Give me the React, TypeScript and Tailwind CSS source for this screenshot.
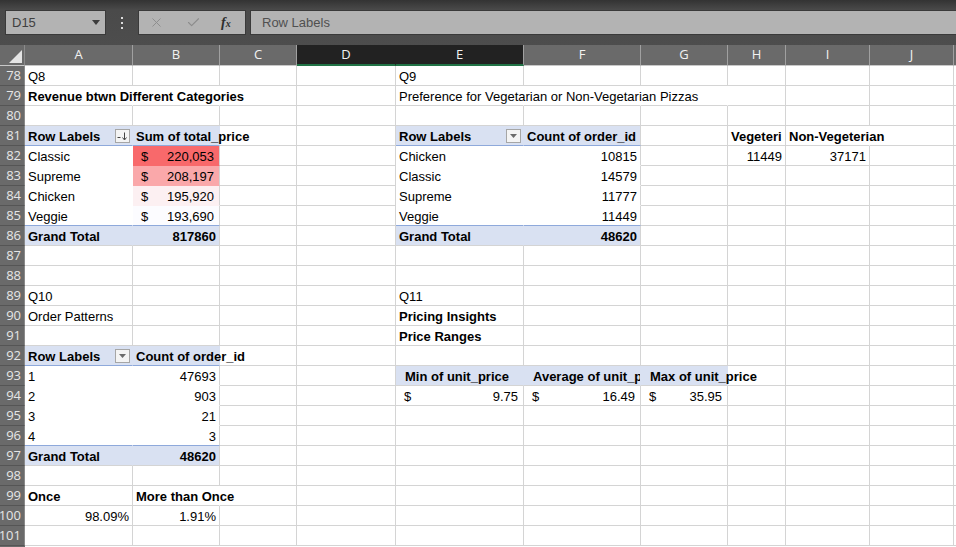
import { X, Check } from "lucide-react";

type Cell = {
    t?: string;
    b?: boolean;
    r?: boolean;
    ov?: boolean;
    cls?: string;
    cur?: string;
    f?: "sort" | "drop";
    pl?: string;
};
type Row = Partial<Record<number, Cell>>;

const W = ["w-[108px]", "w-[87px]", "w-[77px]", "w-[99px]", "w-[128px]", "w-[117px]", "w-[87px]", "w-[58px]", "w-[84px]", "w-[84px]"];
const LETTERS = ["A", "B", "C", "D", "E", "F", "G", "H", "I", "J"];

// cell looks
const G = "bg-white border-r-[#d4d4d4] border-b-[#d4d4d4]";
const NR = "bg-white border-r-white border-b-[#d4d4d4]";
const PH_L = "bg-[#d9e1f2] border-r-[#d9e1f2] border-b-[#8ea9db]";
const PH_R = "bg-[#d9e1f2] border-r-[#d4d4d4] border-b-[#8ea9db]";
const PD_L = "bg-white border-r-white border-b-white";
const PD_R = "bg-white border-r-[#d4d4d4] border-b-white";
const PDX_L = "bg-white border-r-white border-b-[#8ea9db]";
const PDX_R = "bg-white border-r-[#d4d4d4] border-b-[#8ea9db]";
const PG_L = "bg-[#d9e1f2] border-r-[#d9e1f2] border-b-[#d4d4d4]";
const PG_R = "bg-[#d9e1f2] border-r-[#d4d4d4] border-b-[#d4d4d4]";
const BL = "bg-[#d9e1f2] border-r-[#d9e1f2] border-b-[#d4d4d4]";

const ROWS: Record<number, Row> = {
    78: { 0: { t: "Q8" }, 4: { t: "Q9" } },
    79: {
        0: { t: "Revenue btwn Different Categories", b: true, ov: true, cls: NR },
        1: { cls: NR },
        4: { t: "Preference for Vegetarian or Non-Vegetarian Pizzas", ov: true, cls: NR },
        5: { cls: NR },
        6: { cls: NR },
    },
    81: {
        0: { t: "Row Labels", b: true, cls: PH_L, f: "sort" },
        1: { t: "Sum of total_price", b: true, ov: true, cls: PH_L },
        4: { t: "Row Labels", b: true, cls: PH_L, f: "drop" },
        5: { t: "Count of order_id", b: true, cls: PH_R },
        7: { t: "Vegeteri", b: true },
        8: { t: "Non-Vegeterian", b: true, ov: true, cls: NR },
    },
    82: {
        0: { t: "Classic", cls: PD_L },
        1: { cur: "220,053", cls: "bg-[#f8696b] border-r-[#d4d4d4] border-b-[#f8696b]" },
        4: { t: "Chicken", cls: PD_L },
        5: { t: "10815", r: true, cls: PD_R },
        7: { t: "11449", r: true },
        8: { t: "37171", r: true },
    },
    83: {
        0: { t: "Supreme", cls: PD_L },
        1: { cur: "208,197", cls: "bg-[#faa8aa] border-r-[#d4d4d4] border-b-[#faa8aa]" },
        4: { t: "Classic", cls: PD_L },
        5: { t: "14579", r: true, cls: PD_R },
    },
    84: {
        0: { t: "Chicken", cls: PD_L },
        1: { cur: "195,920", cls: "bg-[#fcf0f2] border-r-[#d4d4d4] border-b-[#fcf0f2]" },
        4: { t: "Supreme", cls: PD_L },
        5: { t: "11777", r: true, cls: PD_R },
    },
    85: {
        0: { t: "Veggie", cls: PDX_L },
        1: { cur: "193,690", cls: "bg-[#fcfcff] border-r-[#d4d4d4] border-b-[#8ea9db]" },
        4: { t: "Veggie", cls: PDX_L },
        5: { t: "11449", r: true, cls: PDX_R },
    },
    86: {
        0: { t: "Grand Total", b: true, cls: PG_L },
        1: { t: "817860", b: true, r: true, cls: PG_R },
        4: { t: "Grand Total", b: true, cls: PG_L },
        5: { t: "48620", b: true, r: true, cls: PG_R },
    },
    89: { 0: { t: "Q10" }, 4: { t: "Q11" } },
    90: { 0: { t: "Order Patterns" }, 4: { t: "Pricing Insights", b: true } },
    91: { 4: { t: "Price Ranges", b: true } },
    92: {
        0: { t: "Row Labels", b: true, cls: PH_L, f: "drop" },
        1: { t: "Count of order_id", b: true, ov: true, cls: PH_L },
    },
    93: {
        0: { t: "1", cls: PD_L },
        1: { t: "47693", r: true, cls: PD_R },
        4: { t: "Min of unit_price", b: true, cls: BL, pl: "pl-[9px]" },
        5: { t: "Average of unit_p", b: true, cls: BL, pl: "pl-[9px]" },
        6: { t: "Max of unit_price", b: true, ov: true, cls: BL, pl: "pl-[9px]" },
    },
    94: {
        0: { t: "2", cls: PD_L },
        1: { t: "903", r: true, cls: PD_R },
        4: { cur: "9.75" },
        5: { cur: "16.49" },
        6: { cur: "35.95" },
    },
    95: { 0: { t: "3", cls: PD_L }, 1: { t: "21", r: true, cls: PD_R } },
    96: { 0: { t: "4", cls: PDX_L }, 1: { t: "3", r: true, cls: PDX_R } },
    97: {
        0: { t: "Grand Total", b: true, cls: PG_L },
        1: { t: "48620", b: true, r: true, cls: PG_R },
    },
    99: { 0: { t: "Once", b: true }, 1: { t: "More than Once", b: true, ov: true, cls: NR } },
    100: { 0: { t: "98.09%", r: true }, 1: { t: "1.91%", r: true } },
};

function FilterBtn({ kind }: { kind: "sort" | "drop" }) {
    return (
        <div className="absolute right-[2px] top-[3px] w-[15px] h-[14px] border border-[#a6a6a6] bg-[#f4f4f4] flex items-center justify-center z-20">
            {kind === "drop" ? (
                <svg width="7" height="4" viewBox="0 0 7 4">
                    <path d="M0 0h7L3.5 4z" fill="#6b6b6b" />
                </svg>
            ) : (
                <svg width="11" height="9" viewBox="0 0 11 9">
                    <path d="M0.5 5.5h3" stroke="#444" strokeWidth="1" />
                    <path d="M7.5 0.5v7M5.5 5.5l2 2.5 2-2.5" stroke="#444" strokeWidth="1" fill="none" />
                </svg>
            )}
        </div>
    );
}

function SheetCell({ c, w }: { c?: Cell; w: string }) {
    const look = c?.cls ?? G;
    return (
        <div className={`${w} h-[20px] shrink-0 border-r border-b relative flex pt-[2px] leading-[17px] text-[13px] text-black whitespace-nowrap ${look} ${c?.ov ? "" : "overflow-hidden"}`}>
            {c?.cur ? (
                <div className="flex w-full justify-between pl-[8px] pr-[5px]">
                    <span>$</span>
                    <span>{c.cur}</span>
                </div>
            ) : c?.t ? (
                <span className={`${c.ov ? "relative z-10" : ""} ${c.b ? "font-bold" : ""} ${c.r ? "ml-auto pr-[3px]" : c.pl ?? "pl-[3px]"}`}>{c.t}</span>
            ) : null}
            {c?.f && <FilterBtn kind={c.f} />}
        </div>
    );
}

function FormulaBar() {
    return (
        <div className="h-[45px] bg-[linear-gradient(to_bottom,#333333_0px,#4a4a4a_10px,#4d4d4d_100%)] pt-[10px] pb-[10px] flex">
            <div className="ml-[5px] w-[101px] h-[25px] bg-[#b3b3b3] border border-[#3a3a3a] flex items-center pl-[6px] pr-[5px] text-[13px] text-[#404040]">
                <span>D15</span>
                <svg className="ml-auto" width="8" height="5" viewBox="0 0 8 5">
                    <path d="M0 0h8L4 5z" fill="#3c3c3c" />
                </svg>
            </div>
            <div className="w-[32px] flex flex-col items-center justify-center gap-[3px]">
                <div className="w-[2px] h-[2px] bg-[#dcdcdc]" />
                <div className="w-[2px] h-[2px] bg-[#dcdcdc]" />
                <div className="w-[2px] h-[2px] bg-[#dcdcdc]" />
            </div>
            <div className="w-[108px] h-[25px] bg-[#b3b3b3] border border-[#3a3a3a] flex items-center">
                <X className="ml-[10px] w-[15px] h-[15px] text-[#8c8c8c]" strokeWidth={1.5} />
                <Check className="ml-[22px] w-[15px] h-[15px] text-[#8c8c8c]" strokeWidth={1.75} />
                <span className="ml-[20px] font-['Liberation_Serif',serif] italic font-bold text-[14px] text-[#2e2e2e]">
                    f<span className="text-[10px]">x</span>
                </span>
            </div>
            <div className="ml-[4px] flex-1 h-[25px] bg-[#b3b3b3] border border-[#3a3a3a] border-r-0 flex items-center pl-[11px] text-[13px] text-[#505050]">
                Row Labels
            </div>
        </div>
    );
}

function ColumnHeaders() {
    return (
        <div className="flex h-[21px] bg-[#6a6a6a] font-['Open_Sans',sans-serif] text-[13px] text-[#f2f2f2]">
            <div className="w-[25px] shrink-0 border-r border-r-[#8a8a8a] border-b border-b-[#c8c8c8] relative">
                <svg className="absolute right-[2px] bottom-[2px]" width="13" height="13" viewBox="0 0 13 13">
                    <path d="M13 0V13H0z" fill="#e4e4e4" />
                </svg>
            </div>
            {LETTERS.map((l, i) => {
                const sel = l === "D" || l === "E";
                return (
                    <div
                        key={l}
                        className={`${W[i]} shrink-0 flex items-center justify-center border-r ${sel ? "bg-[#222222] border-r-[#222222] border-b-2 border-b-[#217346]" : "border-r-[#a0a0a0] border-b border-b-[#c8c8c8]"} ${l === "E" ? "border-r-[#a0a0a0]" : ""}`}
                    >
                        {l}
                    </div>
                );
            })}
            <div className="flex-1 border-b border-b-[#c8c8c8]" />
        </div>
    );
}

export default function App() {
    const nums = Array.from({ length: 24 }, (_, i) => 78 + i);
    return (
        <div className="w-[956px] h-[547px] overflow-hidden bg-white font-['Liberation_Sans',Arial,sans-serif]">
            <FormulaBar />
            <ColumnHeaders />
            {nums.map((n) => {
                const row = ROWS[n] ?? {};
                return (
                    <div key={n} className="flex h-[20px]">
                        <div className="w-[25px] shrink-0 h-[20px] bg-[#6a6a6a] border-r border-r-[#8a8a8a] border-b border-b-[#555555] flex items-center justify-end pr-[3px] font-['Open_Sans',sans-serif] text-[13px] text-[#e6e6e6]">
                            {n}
                        </div>
                        {W.map((w, i) => (
                            <SheetCell key={i} c={row[i]} w={w} />
                        ))}
                        <div className="flex-1 h-[20px] border-b border-b-[#d4d4d4]" />
                    </div>
                );
            })}
            <div className="flex h-[1px]">
                <div className="w-[25px] bg-[#6a6a6a]" />
            </div>
        </div>
    );
}
